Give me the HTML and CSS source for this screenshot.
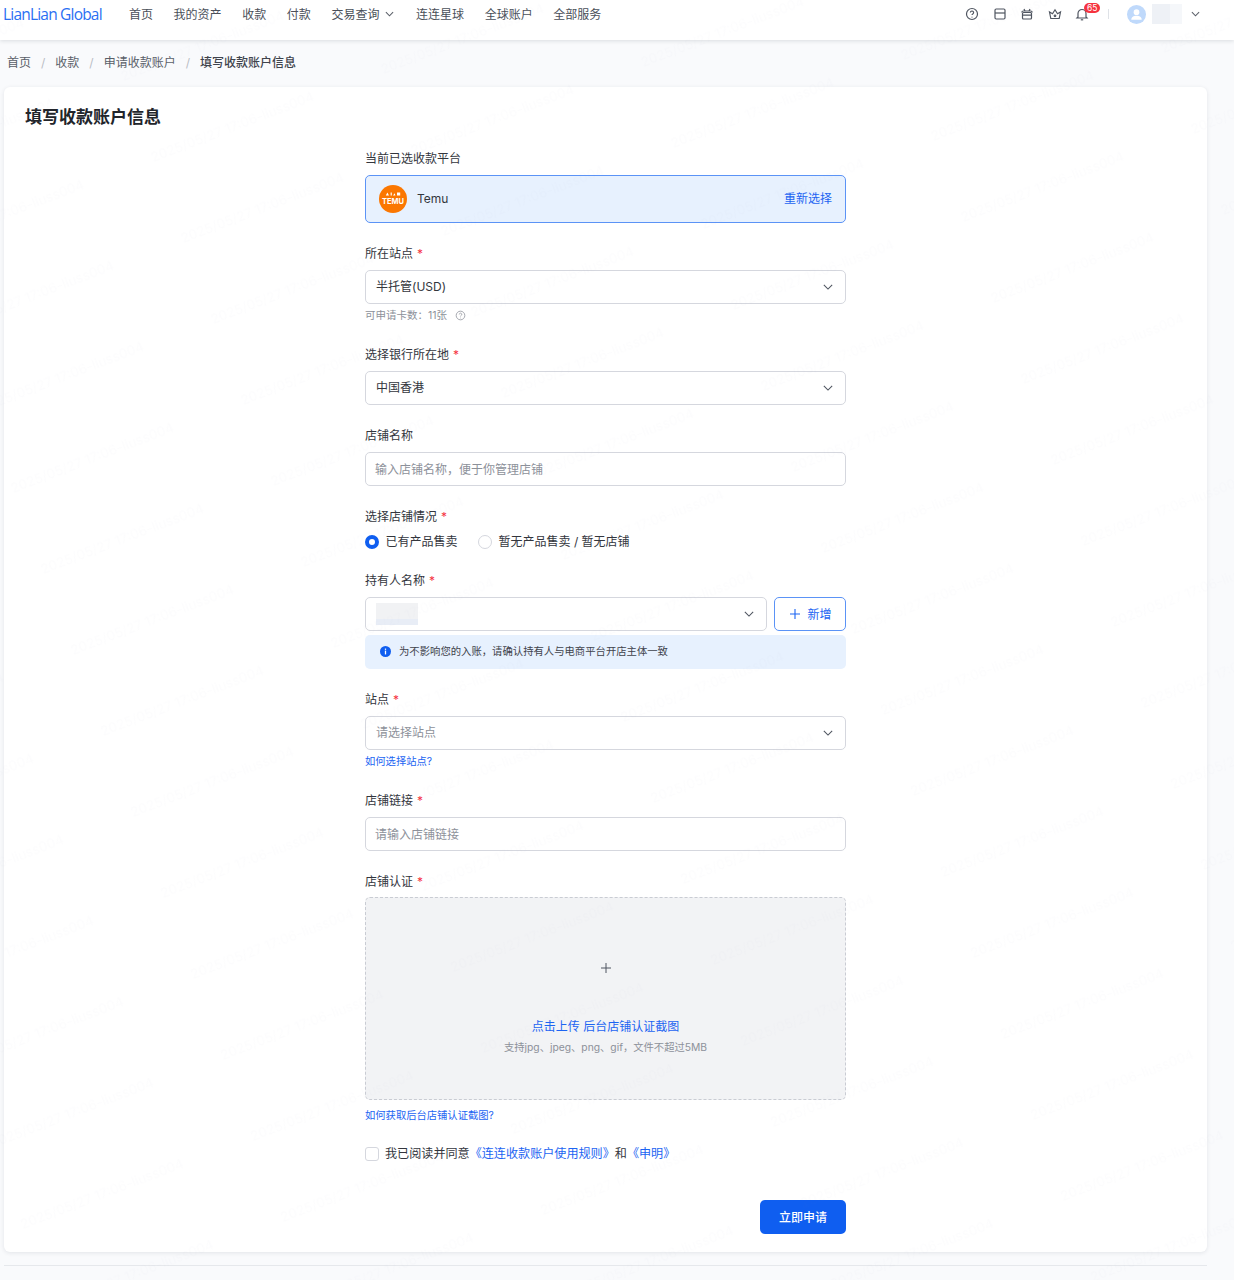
FILE: index.html
```html
<!DOCTYPE html>
<html lang="zh-CN">
<head>
<meta charset="utf-8">
<title>填写收款账户信息</title>
<link rel="stylesheet" href="styles.css">
</head>
<body>
<header class="topbar">
  <a class="logo">LianLian Global</a>
  <nav class="nav">
    <a>首页</a><a>我的资产</a><a>收款</a><a>付款</a>
    <a class="has-caret">交易查询
      <svg class="caret-sm" viewBox="0 0 10 6"><path d="M1 1l4 4 4-4"/></svg>
    </a>
    <a>连连星球</a><a>全球账户</a><a>全部服务</a>
  </nav>
  <div class="tools">
    <svg class="tool" viewBox="0 0 14 14"><circle cx="7" cy="7" r="5.500"/><path d="M5.400 5.600a1.600 1.600 0 1 1 2.400 1.400c-.5.3-.8.6-.8 1.100"/><path d="M7 9.800v.8"/></svg>
    <svg class="tool" viewBox="0 0 14 14"><rect x="2" y="2" width="10" height="10" rx="1.200"/><path d="M2 6h10"/></svg>
    <svg class="tool" viewBox="0 0 14 14"><rect x="2.500" y="5.500" width="9" height="6.500" rx="1"/><path d="M1.800 5.500a1.500 1.500 0 0 1 1.500-1.500h7.400a1.500 1.500 0 0 1 1.500 1.500M2.500 8.200h9M5 4L4 2M9 4l1-2"/></svg>
    <svg class="tool" viewBox="0 0 14 14"><path d="M2.800 11.500h8.400l1.300-6.500-3 1.800L7 2.800 4.500 6.800l-3-1.800z"/><circle cx="7" cy="8.800" r=".8"/></svg>
    <span class="bell">
      <svg class="tool" viewBox="0 0 14 14"><path d="M3 10V6.500a4 4 0 0 1 8 0V10l1 1H2z"/><path d="M5.800 12.800h2.400"/></svg>
      <span class="badge">65</span>
    </span>
    <span class="sep"></span>
    <span class="avatar">
      <svg viewBox="0 0 20 20"><circle cx="10" cy="7.500" r="3"/><path d="M4.500 15.500c0-3 2.500-4.200 5.500-4.200s5.500 1.200 5.500 4.200z"/></svg>
    </span>
    <span class="redact-name"></span>
    <svg class="caret-user" viewBox="0 0 10 6"><path d="M1 1l4 4 4-4"/></svg>
  </div>
</header>

<div class="crumbs">
  <a>首页</a><i>/</i><a>收款</a><i>/</i><a>申请收款账户</a><i>/</i><b>填写收款账户信息</b>
</div>

<main class="card">
  <h1 class="title">填写收款账户信息</h1>
  <form class="form">
    <div class="group">
      <div class="label">当前已选收款平台</div>
      <div class="platform">
        <span class="temu">
          <svg class="temu-top" viewBox="0 0 20 5"><path d="M1 4.500L3 .5l2 4zM7 .5h1.500v4H7zM10 4.500l2-3 1 3zM15 .5h4v4h-4z"/></svg>
          <em class="temu-name">TEMU</em>
        </span>
        <span class="platform-name">Temu</span>
        <a class="link reselect">重新选择</a>
      </div>
    </div>

    <div class="group">
      <div class="label req">所在站点</div>
      <div class="field"><span>半托管(USD)</span><svg class="caret" viewBox="0 0 12 7"><path d="M1 1l5 5 5-5"/></svg></div>
      <div class="hint">可申请卡数：11张
        <svg class="hint-icon" viewBox="0 0 14 14"><circle cx="7" cy="7" r="5.500"/><path d="M5.400 5.600a1.600 1.600 0 1 1 2.400 1.400c-.5.3-.8.6-.8 1.100"/><path d="M7 9.800v.8"/></svg>
      </div>
    </div>

    <div class="group">
      <div class="label req">选择银行所在地</div>
      <div class="field"><span>中国香港</span><svg class="caret" viewBox="0 0 12 7"><path d="M1 1l5 5 5-5"/></svg></div>
    </div>

    <div class="group">
      <div class="label">店铺名称</div>
      <div class="field placeholder input"><span>输入店铺名称，便于你管理店铺</span></div>
    </div>

    <div class="group">
      <div class="label req">选择店铺情况</div>
      <div class="radios">
        <span class="radio on">已有产品售卖</span>
        <span class="radio">暂无产品售卖 / 暂无店铺</span>
      </div>
    </div>

    <div class="group">
      <div class="label req">持有人名称</div>
      <div class="holder-row">
        <div class="field grow"><span class="redact-holder"></span><svg class="caret" viewBox="0 0 12 7"><path d="M1 1l5 5 5-5"/></svg></div>
        <button type="button" class="btn-add"><svg viewBox="0 0 10 10"><path d="M5 0v10M0 5h10"/></svg>新增</button>
      </div>
      <div class="notice">
        <svg class="notice-icon" viewBox="0 0 12 12"><circle cx="6" cy="6" r="6"/><rect x="5.300" y="5" width="1.400" height="4.200" class="w"/><rect x="5.300" y="2.800" width="1.400" height="1.400" class="w"/></svg>
        为不影响您的入账，请确认持有人与电商平台开店主体一致
      </div>
    </div>

    <div class="group">
      <div class="label req">站点</div>
      <div class="field placeholder"><span>请选择站点</span><svg class="caret" viewBox="0 0 12 7"><path d="M1 1l5 5 5-5"/></svg></div>
      <a class="help">如何选择站点?</a>
    </div>

    <div class="group">
      <div class="label req">店铺链接</div>
      <div class="field placeholder input"><span>请输入店铺链接</span></div>
    </div>

    <div class="group">
      <div class="label req">店铺认证</div>
      <div class="upload">
        <svg class="upload-plus" viewBox="0 0 10 10"><path d="M5 0v10M0 5h10"/></svg>
        <div class="upload-title">点击上传 后台店铺认证截图</div>
        <div class="upload-sub">支持jpg、jpeg、png、gif，文件不超过5MB</div>
      </div>
      <a class="help help-upload">如何获取后台店铺认证截图?</a>
    </div>

    <label class="agree">
      <span class="check"></span>
      <span>我已阅读并同意<a class="link">《连连收款账户使用规则》</a>和<a class="link">《申明》</a></span>
    </label>

    <div class="actions"><button type="button" class="btn-primary">立即申请</button></div>
  </form>
</main>
<div class="footer-line"></div>

<svg class="watermark" width="1234" height="1280" aria-hidden="true">
  <defs>
    <pattern id="wm" width="260" height="81" patternUnits="userSpaceOnUse" patternTransform="matrix(1 -.027 .37 1 938 236)">
      <text class="wm-text" transform="matrix(.99 .0267 -.366 .99 30 68) rotate(-21)">2025/05/27 17:06-liuss004</text>
    </pattern>
  </defs>
  <rect width="1234" height="1280" fill="url(#wm)"/>
</svg>
</body>
</html>
```

FILE: styles.css
```css
*, *::before, *::after { box-sizing: border-box; }
html, body { margin: 0; height: 1280px; overflow: hidden; }
body {
  background: #f9fafc;
  color: #33363d;
  font: 12px/17px Inter, "Noto Sans CJK SC", sans-serif;
  position: relative;
}
em { font-style: normal; }

.watermark { position: absolute; left: 0; top: 0; pointer-events: none; }
.wm-text { font: 13.500px Inter, sans-serif; fill: rgba(110, 120, 145, .018); }

.topbar {
  height: 40px;
  background: #fff;
  box-shadow: 0 1px 4px rgba(30, 40, 60, .14);
  display: flex;
  align-items: center;
  position: relative;
  padding-bottom: 12px;
}
.logo {
  font: 400 15.500px/20px "Open Sans", sans-serif;
  letter-spacing: -.8px;
  color: #2a6ff3;
  margin-left: 3px;
  width: 126px;
  white-space: nowrap;
}
.nav { display: flex; gap: 20.600px; color: #4a4f59; }
.nav a { display: flex; align-items: center; white-space: nowrap; }
.caret-sm { width: 9px; height: 6px; margin-left: 6px; margin-right: 1px; fill: none; stroke: #5b6069; stroke-width: 1.200; }

.tools { margin-left: auto; display: flex; align-items: center; padding-right: 34px; }
.tool { width: 14px; height: 14px; fill: none; stroke: #4f5560; stroke-width: 1.200; margin-right: 13.500px; display: block; }
.bell { position: relative; display: block; }
.bell .tool { margin-right: 0; }
.badge {
  position: absolute; left: 9px; top: -4px;
  min-width: 15px;
  background: #f5333f; color: #fff;
  font-size: 8.500px; line-height: 10px; height: 10px;
  padding: 0 3px; border-radius: 5px;
  text-align: center;
}
.sep { width: 1px; height: 10px; background: #dfe2e7; margin: 0 18px 0 19px; }
.avatar { width: 19px; height: 19px; border-radius: 50%; background: #bfd9fb; display: block; }
.avatar svg { width: 19px; height: 19px; display: block; fill: #fff; }
.redact-name { width: 30px; height: 20px; margin-left: 6px; background: linear-gradient(90deg, #eef1f6 60%, #f5f7fa 60%); }
.caret-user { width: 9px; height: 6px; margin-left: 9px; fill: none; stroke: #5b6069; stroke-width: 1.200; }

.crumbs { height: 47px; padding: 14px 0 0 7px; color: #5a5f69; display: flex; line-height: 17px; }
.crumbs i { font-style: normal; color: #b9bdc5; margin: 0 10px; }
.crumbs b { font-weight: 500; color: #3f434c; }

.card {
  margin: 0 27px 0 4px;
  height: 1165px;
  background: #fff;
  border-radius: 6px;
  box-shadow: 0 1px 4px rgba(30, 40, 60, .1);
  padding: 18px 0 0 0;
  position: relative;
}
.title { margin: 0 0 0 21px; font-size: 17px; line-height: 24px; font-weight: 700; color: #22252b; }
.form { width: 481px; margin: 21px 0 0 361px; }

.group { margin-bottom: 22px; }
.label { height: 17px; margin-bottom: 8px; color: #33363d; }
.req::after { content: "*"; color: #f5333f; margin-left: 4px; }

.platform {
  height: 48px;
  border: 1px solid #5b93f6;
  border-radius: 5px;
  background: #e7f1fe;
  display: flex;
  align-items: center;
  padding: 0 13px 1px;
}
.temu {
  width: 28px; height: 28px; border-radius: 50%;
  background: #fb7701; color: #fff;
  display: flex; flex-direction: column; align-items: center; justify-content: center;
  overflow: hidden;
}
.temu-top { width: 20px; height: 4px; fill: #fff; display: block; margin-bottom: 2px; }
.temu-name { font-size: 7.500px; line-height: 7px; font-weight: 700; }
.platform-name { margin-left: 10px; }
.reselect { margin-left: auto; }
.link { color: #1c64f2; }

.field {
  height: 34px;
  border: 1px solid #d5d7de;
  border-radius: 5px;
  background: #fff;
  display: flex;
  align-items: center;
  justify-content: space-between;
  padding: 0 12px 1px 10px;
  color: #33363d;
}
.input { padding: 0 12px 0 9px; }
.placeholder { color: #8d919a; }
.caret { width: 10px; height: 6px; margin-top: 1px; fill: none; stroke: #4f5560; stroke-width: 1.300; }
.hint { height: 20px; padding-top: 3px; font-size: 10.500px; line-height: 17px; color: #8d919a; display: flex; align-items: center; }
.hint-icon { width: 11px; height: 11px; margin-left: 8px; fill: none; stroke: #8d919a; stroke-width: 1; }

.radios { display: flex; gap: 20.500px; }
.radio { display: flex; align-items: center; gap: 6.500px; height: 17px; }
.radio::before {
  content: ""; width: 14px; height: 14px; border-radius: 50%;
  border: 1px solid #d5d7de; background: #fff;
}
.radio.on::before { border: 4px solid #0f5ef0; }

.holder-row { display: flex; gap: 7px; }
.grow { flex: 1; }
.redact-holder {
  width: 42px; height: 22px;
  background: linear-gradient(180deg, #f1f2f4 75%, #e8edf6 75%);
}
.btn-add {
  width: 72px; height: 34px;
  border: 1px solid #5b93f6; border-radius: 5px;
  background: #fff; color: #1c64f2;
  font: inherit;
  display: flex; align-items: center; justify-content: center; gap: 7px;
  padding: 0 0 0 2px;
}
.btn-add svg { width: 10px; height: 10px; fill: none; stroke: #1c64f2; stroke-width: 1.100; }
.notice {
  height: 34px; margin-top: 4px;
  background: #e7f1fe; border-radius: 5px;
  display: flex; align-items: center;
  padding: 0 15px 1px;
  font-size: 10.350px; color: #3f434c;
}
.notice-icon { width: 11px; height: 11px; margin-right: 8px; fill: #0f5ef0; }
.notice-icon .w { fill: #fff; }

.help { display: block; height: 20px; font-size: 10.300px; line-height: 22px; color: #1c64f2; }
.upload {
  height: 203px;
  margin-top: -1px;
  border: 1px dashed #c9ccd3;
  border-radius: 5px;
  background: #f2f3f5;
  text-align: center;
  padding-top: 65px;
}
.upload-plus { display: block; width: 10px; height: 10px; margin: 0 auto; fill: none; stroke: #4f5560; stroke-width: 1; }
.upload-title { margin-top: 45px; color: #1c64f2; }
.upload-sub { margin-top: 4px; font-size: 10.300px; line-height: 17px; color: #8d919a; }
.help-upload { height: 29px; line-height: 30px; }

.agree { display: flex; align-items: center; gap: 6px; height: 17px; margin-top: -6px; font-size: 12.100px; }
.check { width: 14px; height: 14px; border: 1px solid #d5d7de; border-radius: 3px; background: #fff; }

.actions { display: flex; justify-content: flex-end; margin-top: 38px; }
.btn-primary {
  width: 86px; height: 34px;
  border: 0; border-radius: 5px;
  background: #0f5ef0; color: #fff;
  font: inherit; font-weight: 500;
  padding: 1px 0 0;
}
.footer-line { margin: 13px 27px 0 4px; height: 1px; background: #e6e8ec; }
```
